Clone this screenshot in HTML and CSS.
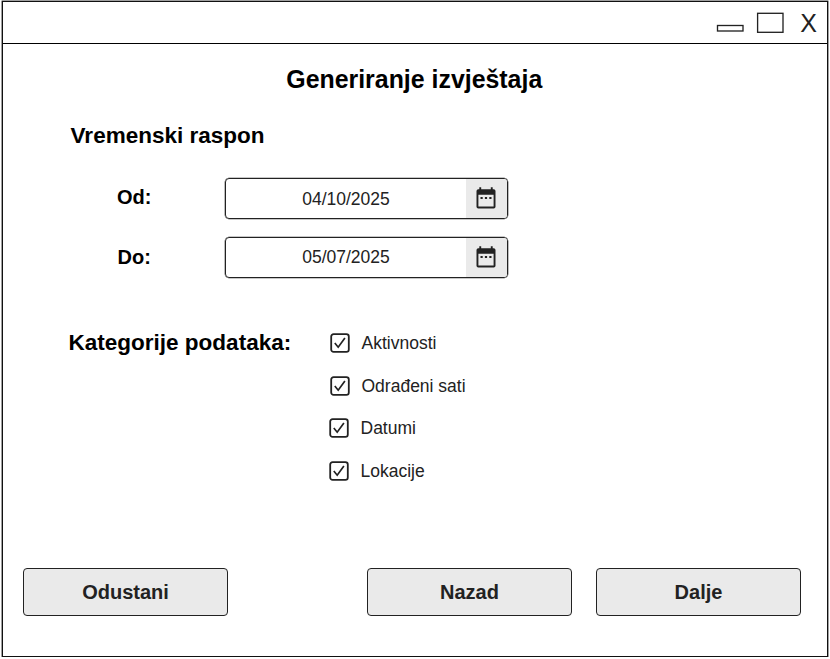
FILE: index.html
```html
<!DOCTYPE html>
<html lang="hr">
<head>
<meta charset="utf-8">
<title>Generiranje izvještaja</title>
<link rel="stylesheet" href="styles.css">
</head>
<body>
<svg class="sprite" aria-hidden="true">
  <symbol id="calendar" viewBox="0 0 20 22">
    <path fill="#222" fill-rule="evenodd" d="M3.300.2H5.200V2.300H14.800V.2h1.900V2.300h1a1.800 1.800 0 0 1 1.800 1.800V19.700a1.800 1.800 0 0 1-1.800 1.800H2.300a1.800 1.800 0 0 1-1.800-1.800V4.100a1.800 1.800 0 0 1 1.800-1.800h1zM2.400 7.700V19.600H17.600V7.700z"/>
    <path fill="#222" d="M4.500 10h2.200v2h-2.200zM8.900 10h2.200v2H8.900zM13.300 10h2.200v2h-2.200z"/>
  </symbol>
  <symbol id="check" viewBox="0 0 20 20">
    <rect x="1.200" y="1.200" width="17.600" height="17.600" rx="2.400" fill="#fff" stroke="#222" stroke-width="1.800"/>
    <path d="M4.800 10L8.200 14.200 14.900 4.900" fill="none" stroke="#222" stroke-width="1.700"/>
  </symbol>
</svg>
<main class="window">
  <header class="titlebar">
    <svg class="control" width="28" height="22" viewBox="0 0 28 22"><rect x="1.500" y="15.500" width="25.500" height="5.500" fill="#fff" stroke="#222" stroke-width="1.330"/></svg>
    <svg class="control" width="28" height="22" viewBox="0 0 28 22"><rect x="1.600" y="2.300" width="25.400" height="19" fill="#fff" stroke="#222" stroke-width="1.330"/></svg>
    <span class="close">X</span>
  </header>
  <h1>Generiranje izvještaja</h1>
  <h2>Vremenski raspon</h2>
  <div class="dates">
    <div class="row"><label class="name">Od:</label><div class="field"><span class="value">04/10/2025</span><span class="picker"><svg width="20" height="22"><use href="#calendar"/></svg></span></div></div>
    <div class="row"><label class="name">Do:</label><div class="field"><span class="value">05/07/2025</span><span class="picker"><svg width="20" height="22"><use href="#calendar"/></svg></span></div></div>
  </div>
  <section class="categories">
    <h2 class="heading">Kategorije podataka:</h2>
    <ul class="options">
      <li class="near"><svg width="20" height="20"><use href="#check"/></svg><span>Aktivnosti</span></li>
      <li class="near"><svg width="20" height="20"><use href="#check"/></svg><span>Odrađeni sati</span></li>
      <li><svg width="20" height="20"><use href="#check"/></svg><span>Datumi</span></li>
      <li><svg width="20" height="20"><use href="#check"/></svg><span>Lokacije</span></li>
    </ul>
  </section>
  <footer class="actions">
    <button class="cancel">Odustani</button>
    <button>Nazad</button>
    <button>Dalje</button>
  </footer>
</main>
</body>
</html>
```

FILE: styles.css
```css
* { box-sizing: border-box; }
body {
  margin: 0;
  background: #fff;
  color: #000;
  font-family: "Liberation Sans", Arial, sans-serif;
}
.sprite { display: none; }
.window {
  display: flow-root;
  width: 826px;
  height: 656px;
  margin: 1px 0 0 2px;
  border: 1px solid #111;
  box-shadow: 0 0 0 .4px #111;
}
.titlebar {
  display: flex;
  justify-content: flex-end;
  height: 42px;
  padding: 7px 10px 0 0;
  border-bottom: 1px solid #000;
}
.control { margin: 1.200px 12px 0 0; flex: none; }
.control + .control { margin: 2px 16px 0 0; }
.close { font-size: 25px; line-height: 28px; color: #222; }
h1, h2 { margin: 0; white-space: nowrap; }
h1 { margin-top: 19px; padding-right: 1.500px; font-size: 24.900px; line-height: 32px; text-align: center; }
h2 { font-size: 22.530px; line-height: 30px; }
.window > h2 { margin: 26px 0 0 67.600px; }
.dates { display: grid; gap: 18px; margin: 27px 0 0 114px; }
.row { display: flex; }
.name { width: 108px; font-size: 20px; font-weight: bold; line-height: 38px; }
.row + .row .name { padding-left: .6px; line-height: 40px; }
.field {
  display: flex;
  width: 283px;
  height: 41px;
  overflow: hidden;
  border: 1px solid #222;
  border-radius: 4px;
  box-shadow: 0 0 0 .3px #222;
}
.value { flex: 1; font-size: 17.500px; line-height: 40px; text-align: center; color: #222; }
.row + .row .value { line-height: 38px; }
.picker { width: 41px; padding: 8px 0 0 10px; background: #eaeaea; }
.picker svg { display: block; }
.categories { display: flex; margin: 49px 0 0 65.500px; }
.heading { width: 260px; padding-top: 1px; }
.options {
  display: grid;
  grid-auto-rows: 42.600px;
  margin: 0;
  padding: .6px 0 .4px;
  list-style: none;
  color: #222;
  font-size: 17.500px;
  line-height: 20px;
}
.options li { display: flex; gap: 12px; align-items: center; height: 31px; }
.options .near { padding-left: 1px; }
.actions { display: flex; gap: 24px; margin: 70px 26px 0 20px; }
button {
  width: 205px;
  height: 48px;
  padding: 0;
  border: 1px solid #222;
  border-radius: 4px;
  background: #eaeaea;
  color: #222;
  font: bold 20px "Liberation Sans", Arial, sans-serif;
}
.cancel { margin-right: auto; }
```
